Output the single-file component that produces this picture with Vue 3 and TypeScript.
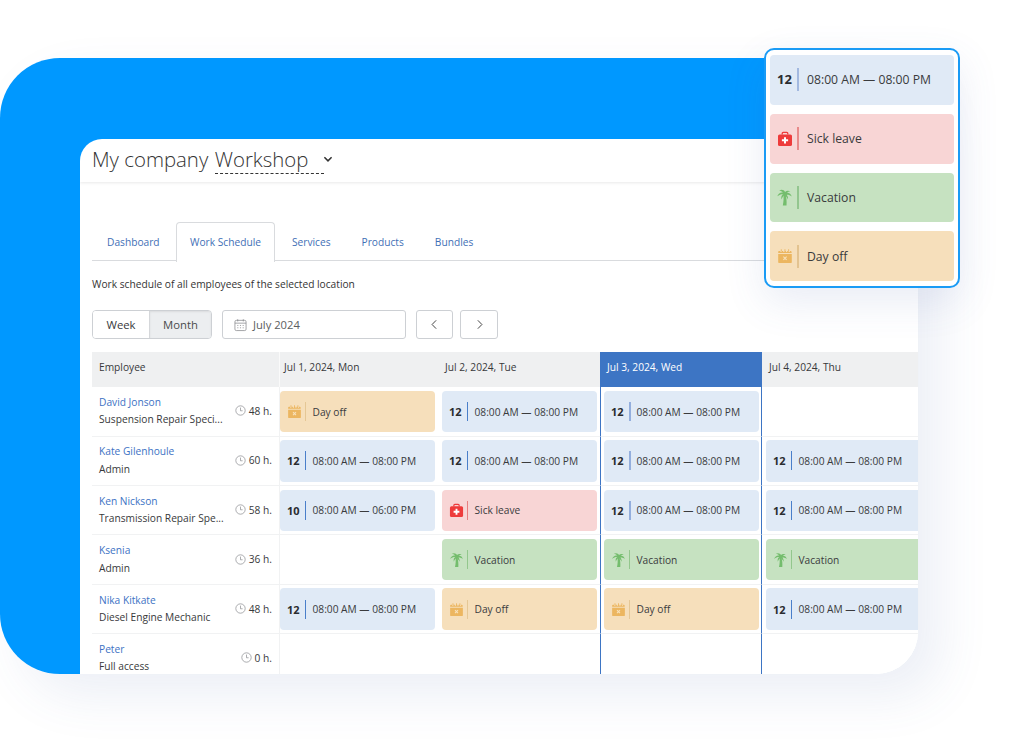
<script setup lang="ts">
type Kind = 'shift' | 'sick' | 'vacation' | 'off' | 'none'
interface Cell { kind: Kind; hours?: number; time?: string }

const S12: Cell = { kind: 'shift', hours: 12, time: '08:00 AM — 08:00 PM' }
const S10: Cell = { kind: 'shift', hours: 10, time: '08:00 AM — 06:00 PM' }
const SICK: Cell = { kind: 'sick' }
const VAC: Cell = { kind: 'vacation' }
const OFF: Cell = { kind: 'off' }
const NONE: Cell = { kind: 'none' }

const labels: Record<string, string> = { sick: 'Sick leave', vacation: 'Vacation', off: 'Day off' }
const tabs = ['Dashboard', 'Work Schedule', 'Services', 'Products', 'Bundles']
const days = ['Jul 1, 2024, Mon', 'Jul 2, 2024, Tue', 'Jul 3, 2024, Wed', 'Jul 4, 2024, Thu']
const legend: Cell[] = [S12, SICK, VAC, OFF]

const rows = [
  { name: 'David Jonson', role: 'Suspension Repair Speci...', hours: 48, cells: [OFF, S12, S12, NONE] },
  { name: 'Kate Gilenhoule', role: 'Admin', hours: 60, cells: [S12, S12, S12, S12] },
  { name: 'Ken Nickson', role: 'Transmission Repair Spe...', hours: 58, cells: [S10, SICK, S12, S12] },
  { name: 'Ksenia', role: 'Admin', hours: 36, cells: [NONE, VAC, VAC, VAC] },
  { name: 'Nika Kitkate', role: 'Diesel Engine Mechanic', hours: 48, cells: [S12, OFF, OFF, S12] },
  { name: 'Peter', role: 'Full access', hours: 0, cells: [NONE, NONE, NONE, NONE] },
]
</script>

<template>
  <div class="stage">
    <svg class="defs" aria-hidden="true">
      <symbol id="i-sick" viewBox="0 0 16 16">
        <path d="M5.2 3.6V2.4c0-.6.4-1 1-1h3.6c.6 0 1 .4 1 1v1.2" fill="none" stroke="#ee3b3b" stroke-width="1.3" />
        <rect x="1" y="3.4" width="14" height="11.6" rx="1.6" fill="#ee3b3b" />
        <path d="M7 6.2h2v2.1h2.1v2H9v2.1H7v-2.1H4.9v-2H7z" fill="#fff" />
      </symbol>
      <symbol id="i-vacation" viewBox="0 0 16 16">
        <path d="M6.900 5.500c.5 3.500.3 7-.5 10.500h3.500c.3-3.500 0-7-1-10.500z" fill="#74bd6d" />
        <path d="M8.200 6C6.500 5 4 5.300 1.200 7.400 2.200 4.600 4.300 3.300 6.500 3.800 5.600 2.700 4.400 2.100 3 1.900 5.400.6 7.700 1.400 8.500 3.300 9.800 1.900 11.900 1.700 13.600 2.800 12.300 2.800 11.100 3.200 10.300 4 12.300 3.800 14.200 5 14.800 7.600 13.400 6.500 11.800 5.900 10.200 6 11.100 7 11.500 8.400 11.300 10.300 10.400 8.500 9.400 7.200 8.200 6.400 6.900 7 5.900 8.300 5.200 10.300 4.700 8.400 5 6.900 6 5.800 7 5.500 7.700 5.600 8.200 6Z" fill="#74bd6d" />
      </symbol>
      <symbol id="i-off" viewBox="0 0 16 16">
        <path d="M1.200 6h13.600v8c0 .6-.4 1-1 1H2.200c-.6 0-1-.4-1-1z" fill="#ecb660" />
        <path d="M1.200 5V4c0-.6.4-1 1-1h1.200v1.100h1.300V3h1.500v1.100h1.300V3h1.400v1.100h1.300V3h1.400v1.100h1.300V3h.4c.6 0 1.300.4 1.300 1v1z" fill="#ecb660" />
        <path d="M3.800 1.300h.9v1.900h-.9zM7.500 1.300h.9v1.900h-.9zM11.200 1.300h.9v1.900h-.9z" fill="#ecb660" />
        <path d="M6.400 8.600l3.200 3.200M9.600 8.600l-3.200 3.200" stroke="#f8e2bd" stroke-width="1.100" fill="none" />
      </symbol>
      <symbol id="i-clock" viewBox="0 0 12 12">
        <circle cx="6" cy="6" r="5.100" fill="none" stroke="#8d8f93" stroke-width=".8" />
        <path d="M6 2.800V6.300H8.300" fill="none" stroke="#8d8f93" stroke-width=".8" />
      </symbol>
    </svg>

    <div class="backdrop">
      <main class="card">
        <header class="topbar">
          <span class="company">My company</span>
          <span class="location">Workshop</span>
          <svg class="caret" viewBox="0 0 10 10"><path d="M2 3.600 5 6.600 8 3.600" fill="none" stroke="#333" stroke-width="1.300" /></svg>
        </header>

        <section class="content">
          <nav class="tabs">
            <a v-for="t in tabs" :key="t" class="tab" :class="{ active: t === 'Work Schedule' }">{{ t }}</a>
          </nav>

          <p class="desc">Work schedule of all employees of the selected location</p>

          <div class="toolbar">
            <div class="switch">
              <button class="seg">Week</button>
              <button class="seg on">Month</button>
            </div>
            <div class="date">
              <svg class="cal" viewBox="0 0 14 14" fill="none" stroke="#85878b" stroke-width=".8">
                <rect x="1" y="2" width="12" height="11" rx="1.500" />
                <path d="M1 5h12M4 .8v2.400M10 .8v2.400" />
                <path d="M3.500 7.500h1.200M6.400 7.500h1.200M9.300 7.500h1.200M3.500 10h1.200M6.400 10h1.200M9.300 10h1.200" />
              </svg>
              <span>July 2024</span>
            </div>
            <button class="nav prev"><svg viewBox="0 0 10 10"><path d="M6.500 1.200 2.800 5l3.700 3.800" fill="none" stroke="#444" stroke-width=".9" /></svg></button>
            <button class="nav next"><svg viewBox="0 0 10 10"><path d="M3.500 1.200 7.200 5 3.500 8.800" fill="none" stroke="#444" stroke-width=".9" /></svg></button>
          </div>

          <div class="grid">
            <div class="head emp">Employee</div>
            <div v-for="(d, i) in days" :key="d" class="head day" :class="{ first: i === 0, today: i === 2 }">{{ d }}</div>

            <template v-for="r in rows" :key="r.name">
              <div class="person">
                <div class="who">
                  <a class="name">{{ r.name }}</a>
                  <span class="role">{{ r.role }}</span>
                </div>
                <div class="total">
                  <svg class="clock"><use href="#i-clock" /></svg>
                  <span>{{ r.hours }} h.</span>
                </div>
              </div>
              <div v-for="(c, i) in r.cells" :key="i" class="cell" :class="{ first: i === 0, today: i === 2 }">
                <div v-if="c.kind !== 'none'" class="chip" :class="c.kind">
                  <b v-if="c.kind === 'shift'" class="lead">{{ c.hours }}</b>
                  <svg v-else class="lead ico"><use :href="'#i-' + c.kind" /></svg>
                  <i class="bar"></i>
                  <span>{{ c.kind === 'shift' ? c.time : labels[c.kind] }}</span>
                </div>
              </div>
            </template>
          </div>
        </section>
      </main>
    </div>

    <aside class="legend">
      <div v-for="c in legend" :key="c.kind" class="chip big" :class="c.kind">
        <b v-if="c.kind === 'shift'" class="lead">{{ c.hours }}</b>
        <svg v-else class="lead ico"><use :href="'#i-' + c.kind" /></svg>
        <i class="bar"></i>
        <span>{{ c.kind === 'shift' ? c.time : labels[c.kind] }}</span>
      </div>
    </aside>
  </div>
</template>

<style>
html, body { margin: 0; background: #fff; overflow: hidden; }
</style>

<style scoped>
.stage {
  position: relative;
  width: 1023px;
  height: 746px;
  padding-top: 58px;
  box-sizing: border-box;
  overflow: hidden;
  font-family: "Open Sans", "Noto Sans", sans-serif;
  font-size: 10.200px;
  color: #38393b;
  background: #fff;
}
.defs { position: absolute; width: 0; height: 0; }

.backdrop {
  width: 918px;
  height: 616px;
  box-sizing: border-box;
  padding: 81px 0 0 80px;
  background:
    linear-gradient(#0098ff 110px, transparent 110px),
    linear-gradient(90deg, #0098ff 110px, #fff 110px);
  border-radius: 60px 60px 42px 60px;
  overflow: hidden;
  box-shadow: 22px 22px 50px rgba(70, 95, 170, .1);
}
.card {
  height: 100%;
  background: #fff;
  border-top-left-radius: 22px;
  overflow: hidden;
}
.topbar {
  height: 43px;
  box-sizing: border-box;
  padding: 5px 0 0 12px;
  display: flex;
  gap: 6.500px;
  align-items: flex-start;
  box-shadow: 0 1px 3px rgba(0, 0, 0, .09);
  font-size: 20.400px;
  line-height: 30px;
  font-weight: 300;
  color: #333;
}
.location {
  box-sizing: border-box;
  height: 30px;
  padding-right: 16px;
  border-bottom: 1px dashed #333;
}
.caret { width: 12px; height: 12px; margin: 9px 0 0 -9px; }

.content { padding: 40px 0 0 12px; }
.tabs {
  display: flex;
  height: 39px;
  box-sizing: border-box;
  border-bottom: 1px solid #d9dbde;
}
.tab {
  padding: 0 14.500px;
  line-height: 38px;
  color: #3f6fb6;
  border: 1px solid transparent;
  border-bottom: 0;
  height: 38px;
}
.tab:first-child { margin-left: -.5px; }
.tab.active {
  height: 39px;
  margin: 0 1px 0 .5px;
  background: #fff;
  padding: 0 13.500px;
  border-color: #d9dbde;
  border-radius: 4px 4px 0 0;
}
.desc { margin: 15px 0 0; line-height: 17px; color: #333; }

.toolbar { display: flex; margin-top: 17px; height: 29px; }
.switch {
  display: flex;
  width: 120px;
  box-sizing: border-box;
  border: 1px solid #cdd0d4;
  border-radius: 4px;
  overflow: hidden;
}
.seg {
  border: 0;
  padding: 0;
  background: #fff;
  font: inherit;
  font-size: 11.300px;
  color: #38393b;
  width: 56px;
}
.seg.on {
  flex: 1;
  background: #eceef0;
  border-left: 1px solid #d5d7da;
  box-shadow: inset 0 1px 2px rgba(0, 0, 0, .08);
  color: #4a4b4d;
}
.date {
  margin-left: 10px;
  width: 184px;
  box-sizing: border-box;
  border: 1px solid #cdd0d4;
  border-radius: 3px;
  display: flex;
  align-items: center;
  padding-left: 11px;
  gap: 6px;
  font-size: 11.200px;
  color: #5c5e61;
}
.cal { width: 13px; height: 14px; }
.nav {
  width: 37px;
  padding: 0;
  background: #fff;
  border: 1px solid #cdd0d4;
  border-radius: 3px;
  display: flex;
  align-items: center;
  justify-content: center;
}
.nav svg { width: 11px; height: 11px; }
.prev { margin-left: 10px; }
.next { margin-left: 7px; width: 38px; }

.grid {
  margin-top: 13px;
  display: grid;
  grid-template-columns: 187px 159px 162px 162px 162px;
  grid-template-rows: 35.300px repeat(6, 49.400px);
  height: 322px;
  overflow: hidden;
}
.head {
  background: #eff0f1;
  display: flex;
  align-items: center;
  padding: 0 0 6px 7px;
  color: #38393b;
}
.head.first { padding-left: 4px; border-left: 1px solid #fafafa; }
.head.today {
  background: #3d75c4;
  color: #fff;
  padding-left: 7px;
}
.person {
  display: flex;
  align-items: center;
  justify-content: space-between;
  padding: 0 7px;
  border-bottom: 1px solid #f1f2f3;
}
.who { display: flex; flex-direction: column; min-width: 0; }
.name { color: #3d72c4; line-height: 17.500px; }
.role { line-height: 17.500px; color: #38393b; white-space: nowrap; }
.total { display: flex; align-items: center; gap: 3px; margin-bottom: 1px; white-space: nowrap; }
.clock { width: 11px; height: 11px; }

.cell {
  padding: 3.500px 3px 0 4px;
  border-bottom: 1px solid #f1f2f3;
  box-sizing: border-box;
  min-width: 0;
}
.cell.first { padding-left: 0; border-left: 1px solid #f1f2f3; }
.cell.today {
  padding: 3.500px 2px 0 3px;
  border-left: 1px solid #3d75c4;
  border-right: 1px solid #3d75c4;
}

.chip {
  height: 41.500px;
  box-sizing: border-box;
  border-radius: 4px;
  display: flex;
  align-items: center;
  padding-left: 7px;
  color: #3a3b3d;
  white-space: nowrap;
}
.lead { width: 17px; flex: none; font-size: 11px; font-weight: 700; color: #2a2c30; }
.ico { width: 15px; height: 15px; margin-right: 2px; }
.bar { width: 1px; height: 19px; flex: none; margin: 0 6.500px 0 1px; }
.shift { background: #e0eaf6; }
.shift .bar { background: #4a7fca; }
.today .shift .bar { width: 2px; margin-right: 5.500px; background: #93aedd; }
.sick { background: #f8d5d5; }
.sick .bar { background: #e77f7f; }
.vacation { background: #c6e2c1; }
.vacation .bar { background: #93c78d; }
.off { background: #f6dfbb; }
.off .bar { background: #e5c795; }

.legend {
  position: absolute;
  left: 764px;
  top: 48px;
  width: 196px;
  height: 240px;
  box-sizing: border-box;
  padding: 5px 4px;
  display: flex;
  flex-direction: column;
  gap: 9px;
  background: #fff;
  border: 2px solid #1a9bf5;
  border-radius: 10px;
  box-shadow: 0 14px 40px rgba(70, 95, 170, .12);
}
.big {
  height: 50px;
  border-radius: 4px;
  padding-left: 7px;
  font-size: 12.200px;
}
.big .lead { width: 20px; font-size: 13px; line-height: 16px; margin-bottom: 1px; }
.big .ico { width: 16px; height: 16px; margin: 0 4px 0 0; }
.big.vacation .ico { width: 17px; height: 18px; margin: 0 4px 0 -1px; }
.big .bar { width: 2px; height: 23px; margin: 0 8px 0 0; background: #a3b9e0; }
.big.sick .bar { background: #e88a8a; }
.big.vacation .bar { background: #93c68f; }
.big.off .bar { background: #e3c390; }
</style>
